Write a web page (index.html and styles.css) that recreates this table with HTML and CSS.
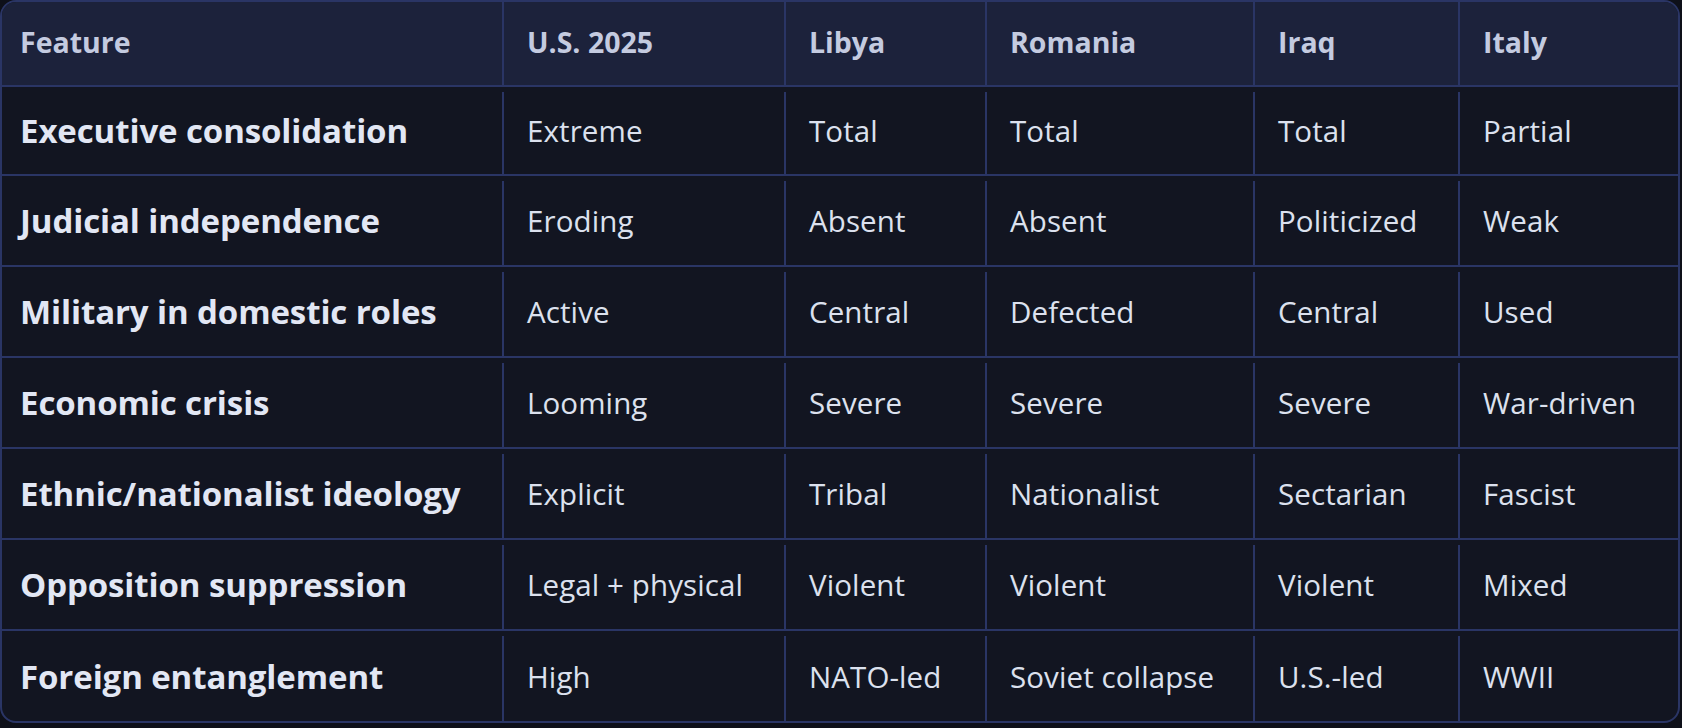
FILE: index.html
```html
<!DOCTYPE html>
<html lang="en">
<head>
<meta charset="utf-8">
<title>Comparison</title>
<link rel="stylesheet" href="styles.css">
</head>
<body>
<div class="table">
  <div class="hcell first">Feature</div>
  <div class="hcell">U.S. 2025</div>
  <div class="hcell">Libya</div>
  <div class="hcell">Romania</div>
  <div class="hcell">Iraq</div>
  <div class="hcell">Italy</div>

  <div class="fcell r1">Executive consolidation</div>
  <div class="cell r1">Extreme</div>
  <div class="cell r1">Total</div>
  <div class="cell r1">Total</div>
  <div class="cell r1">Total</div>
  <div class="cell r1">Partial</div>

  <div class="fcell">Judicial independence</div>
  <div class="cell">Eroding</div>
  <div class="cell">Absent</div>
  <div class="cell">Absent</div>
  <div class="cell">Politicized</div>
  <div class="cell">Weak</div>

  <div class="fcell">Military in domestic roles</div>
  <div class="cell">Active</div>
  <div class="cell">Central</div>
  <div class="cell">Defected</div>
  <div class="cell">Central</div>
  <div class="cell">Used</div>

  <div class="fcell">Economic crisis</div>
  <div class="cell">Looming</div>
  <div class="cell">Severe</div>
  <div class="cell">Severe</div>
  <div class="cell">Severe</div>
  <div class="cell">War-driven</div>

  <div class="fcell">Ethnic/nationalist ideology</div>
  <div class="cell">Explicit</div>
  <div class="cell">Tribal</div>
  <div class="cell">Nationalist</div>
  <div class="cell">Sectarian</div>
  <div class="cell">Fascist</div>

  <div class="fcell">Opposition suppression</div>
  <div class="cell">Legal + physical</div>
  <div class="cell">Violent</div>
  <div class="cell">Violent</div>
  <div class="cell">Violent</div>
  <div class="cell">Mixed</div>

  <div class="fcell last">Foreign entanglement</div>
  <div class="cell last">High</div>
  <div class="cell last">NATO-led</div>
  <div class="cell last">Soviet collapse</div>
  <div class="cell last">U.S.-led</div>
  <div class="cell last">WWII</div>
</div>
</body>
</html>
```
FILE: styles.css
```css
html, body {
  margin: 0;
  padding: 0;
  background: #0e1019;
}

body {
  font-family: "Open Sans", Lato, sans-serif;
}

.table {
  width: 1680px;
  height: 723px;
  box-sizing: border-box;
  border: 2px solid #2a3565;
  border-radius: 16px;
  overflow: hidden;
  display: grid;
  grid-template-columns: 500px 282px 201px 268px 205px 1fr;
  grid-template-rows: 85px 89px 91px 91px 91px 91px 91px 1fr;
  background: #121521;
}

.hcell {
  background: #1c223b;
  color: #c4cbe0;
  font-weight: 700;
  font-size: 28.5px;
  display: flex;
  align-items: center;
  padding-left: 23px;
  padding-bottom: 4px;
  border-left: 2px solid #2a3565;
  border-bottom: 2px solid #2a3565;
}

.hcell.first {
  border-left: none;
  padding-left: 18px;
}

.fcell {
  color: #e2e7f4;
  font-weight: 700;
  font-size: 33px;
  letter-spacing: -0.1px;
  display: flex;
  align-items: center;
  padding-left: 18px;
  border-bottom: 2px solid #2a3565;
}

.cell {
  color: #dce1ee;
  font-size: 29.5px;
  letter-spacing: 0.1px;
  display: flex;
  align-items: center;
  padding-left: 25px;
  border-bottom: 2px solid #2a3565;
  background-image: linear-gradient(#2a3565, #2a3565);
  background-repeat: no-repeat;
  background-position: 0 5px;
  background-size: 2px calc(100% - 5px);
}

.fcell.last,
.cell.last {
  border-bottom: none;
}
```
